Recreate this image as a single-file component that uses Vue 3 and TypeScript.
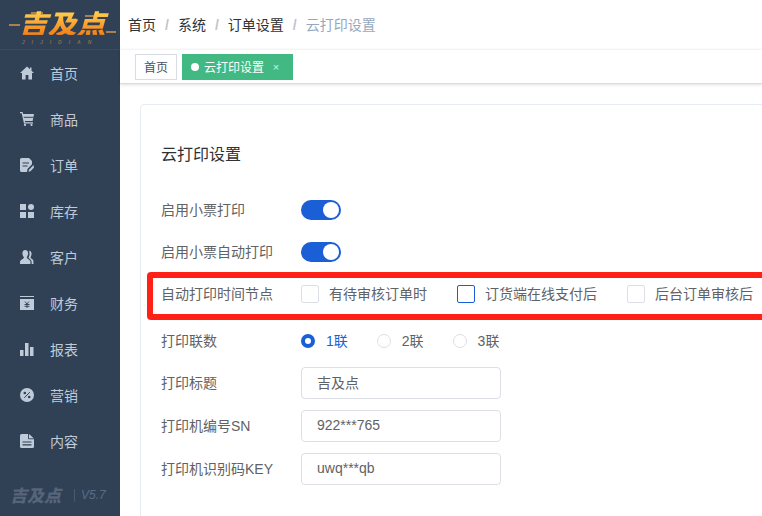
<script setup lang="ts">
const menu = [
  { label: '首页', icon: 'home' },
  { label: '商品', icon: 'cart' },
  { label: '订单', icon: 'order' },
  { label: '库存', icon: 'stock' },
  { label: '客户', icon: 'user' },
  { label: '财务', icon: 'money' },
  { label: '报表', icon: 'chart' },
  { label: '营销', icon: 'promo' },
  { label: '内容', icon: 'doc' },
]
const crumbs = ['首页', '系统', '订单设置']
const checks = [
  { label: '有待审核订单时', focus: false },
  { label: '订货端在线支付后', focus: true },
  { label: '后台订单审核后', focus: false },
]
const radios = [
  { label: '1联', on: true },
  { label: '2联', on: false },
  { label: '3联', on: false },
]
const inputs = [
  { label: '打印标题', value: '吉及点' },
  { label: '打印机编号SN', value: '922***765' },
  { label: '打印机识别码KEY', value: 'uwq***qb' },
]
</script>

<template>
  <div class="app">
    <aside class="side">
      <div class="logo">
        <div class="logo-art">
          <i class="dash d1"></i><i class="dash d2"></i><i class="dash d3"></i><i class="dash d4"></i>
          <span class="logo-text">吉及点</span>
          <span class="logo-sub">JIJIDIAN</span>
        </div>
      </div>
      <nav class="menu">
        <a v-for="m in menu" :key="m.label" class="item">
          <svg class="ico" viewBox="0 0 14 14" width="14" height="14" fill="#bfcbd9">
            <template v-if="m.icon === 'home'">
              <path d="M7 .5 0 7h2v6.500h3.600V9h2.800v4.500H12V7h2L11.500 4.700V1.500H10v1.800z" />
            </template>
            <template v-else-if="m.icon === 'cart'">
              <path d="M0 0h2.500l.7 2H14l-1.400 7H4.800l.3 1.300H13v1.200H4L1.700 1.300H0z" />
              <path d="M3.800 5.300h9.500" stroke="#304156" stroke-width="1" />
              <circle cx="5" cy="12.900" r="1.100" /><circle cx="11.500" cy="12.900" r="1.100" />
            </template>
            <template v-else-if="m.icon === 'order'">
              <path d="M1.500 0H9l3 3v3.300L7.500 11l-.5 3H1.500Q0 14 0 12.500V1.500Q0 0 1.500 0z" />
              <path d="M2.500 5h6.500M2.500 8h5" stroke="#304156" stroke-width="1.200" />
              <path d="M13.500 7 9 11.800 8.500 13.800 10.500 13.300 14 9.500z" />
            </template>
            <template v-else-if="m.icon === 'stock'">
              <rect x="0" y="0" width="6" height="6" /><circle cx="11" cy="3" r="3" />
              <rect x="0" y="8" width="6" height="6" /><rect x="8" y="8" width="6" height="6" />
            </template>
            <template v-else-if="m.icon === 'user'">
              <path d="M5.200 0C7.500 0 8.500 2 8 4.300 7.700 5.800 7 6.800 6.700 7.500c.3 1 2.300 2 3.300 3 .5.600.5 1.800.5 3.500H0c0-1.700 0-3 .6-3.500 1.100-1 3.200-2 3.400-3C3.500 6.800 2.800 5.800 2.500 4.300 2 2 3 0 5.200 0z" />
              <path d="M9 .8c2 .2 2.800 2 2.500 3.800-.2 1.300-.8 2.200-1 2.800.3.800 1.800 1.500 2.500 2.400.4.600.5 2 .5 4.200h-1.800c0-2-.2-3.400-1-4.200-.8-.8-1.800-1.500-2.200-2.300.5-1 1-2 1-3.300 0-1.300-.2-2.500-.5-3.400z" />
            </template>
            <template v-else-if="m.icon === 'money'">
              <rect x="0" y="0" width="14" height="1" /><rect x="0" y="3" width="14" height="11" />
              <path d="M5 5.500 7 8l2-2.500M4.500 8.500h5M4.500 10.300h5M7 8v4" stroke="#304156" stroke-width=".9" fill="none" />
            </template>
            <template v-else-if="m.icon === 'chart'">
              <rect x="0" y="8" width="3.500" height="6" /><rect x="5" y="1" width="3.500" height="13" /><rect x="10" y="5" width="3.500" height="9" />
            </template>
            <template v-else-if="m.icon === 'promo'">
              <circle cx="7" cy="7" r="7" />
              <path d="M4.300 9.800 9.800 4.200" stroke="#304156" stroke-width="1" />
              <circle cx="4.800" cy="5" r="1.300" fill="#304156" /><circle cx="9.200" cy="9" r="1.300" fill="#304156" />
            </template>
            <template v-else>
              <path d="M1.500 0H9l5 4.500v8Q14 14 12.500 14h-11Q0 14 0 12.500V1.500Q0 0 1.500 0z" />
              <path d="M8.500 0v4.800H14" stroke="#304156" stroke-width=".9" fill="none" />
              <path d="M2.500 8h9M2.500 10.800h9" stroke="#304156" stroke-width="1.200" />
            </template>
          </svg>
          <span>{{ m.label }}</span>
        </a>
      </nav>
      <div class="foot">
        <span class="foot-logo">吉及点</span>
        <span class="foot-ver">V5.7</span>
      </div>
    </aside>

    <div class="main">
      <header class="nav">
        <template v-for="c in crumbs" :key="c">
          <span class="crumb">{{ c }}</span><span class="sep">/</span>
        </template>
        <span class="crumb last">云打印设置</span>
      </header>
      <div class="tags">
        <span class="tag">首页</span>
        <span class="tag on"><i class="dot"></i>云打印设置<em class="x">×</em></span>
      </div>
      <section class="page">
        <div class="card">
          <h2 class="title">云打印设置</h2>
          <div class="row sw">
            <label class="lab">启用小票打印</label>
            <span class="switch"><i></i></span>
          </div>
          <div class="row sw">
            <label class="lab">启用小票自动打印</label>
            <span class="switch"><i></i></span>
          </div>
          <div class="row chk">
            <label class="lab">自动打印时间节点</label>
            <div class="group">
              <span v-for="c in checks" :key="c.label" class="check">
                <i class="box" :class="{ focus: c.focus }"></i>{{ c.label }}
              </span>
            </div>
            <div class="mark"></div>
          </div>
          <div class="row rad">
            <label class="lab">打印联数</label>
            <div class="group">
              <span v-for="r in radios" :key="r.label" class="radio" :class="{ on: r.on }">
                <i class="circle"></i>{{ r.label }}
              </span>
            </div>
          </div>
          <div v-for="f in inputs" :key="f.label" class="row inp">
            <label class="lab">{{ f.label }}</label>
            <input class="input" :value="f.value" readonly />
          </div>
        </div>
      </section>
    </div>
  </div>
</template>

<style>
html, body { margin: 0; overflow: hidden; background: #fff; }
</style>

<style scoped>
.app {
  display: flex;
  width: 762px;
  height: 516px;
  overflow: hidden;
  font-family: "Liberation Sans", "Noto Sans CJK SC", sans-serif;
  font-size: 14px;
  color: #606266;
}
.side {
  width: 120px;
  flex: none;
  background: #304156;
  display: flex;
  flex-direction: column;
}
.logo {
  height: 49px;
  border-bottom: 1px solid #3a4a60;
  display: flex;
  align-items: center;
  justify-content: center;
}
.logo-art {
  position: relative;
  width: 106px;
  height: 38px;
  margin-top: 5px;
}
.logo-text {
  display: block;
  text-align: center;
  font: italic 900 29px/28px "Noto Sans CJK SC", sans-serif;
  letter-spacing: 0;
  transform: translateX(2px) scale(1, .92);
  background: linear-gradient(180deg, #ffd04f 10%, #f5861d 90%);
  -webkit-background-clip: text;
  background-clip: text;
  color: transparent;
}
.logo-sub {
  display: block;
  margin-top: 3px;
  text-align: center;
  font: italic 700 5px/6px "Liberation Sans", sans-serif;
  letter-spacing: 7px;
  color: #8d6a45;
}
.dash { position: absolute; height: 2px; background: #a98150; }
.d1 { left: 2px; top: 16px; width: 11px; }
.d2 { right: -3px; top: 23px; width: 10px; }
.d3 { left: 24px; top: 4px; width: 12px; }
.d4 { left: 78px; top: 7px; width: 18px; }
.menu { display: flex; flex-direction: column; }
.item {
  height: 46px;
  display: flex;
  align-items: center;
  padding-left: 20px;
  gap: 16px;
  color: #bfcbd9;
}
.ico { flex: none; }
.foot {
  margin-top: auto;
  height: 42px;
  display: flex;
  align-items: center;
  padding-left: 10px;
}
.foot-logo {
  width: 52px;
  font: italic 900 17px/20px "Noto Sans CJK SC", sans-serif;
  color: #566579;
  letter-spacing: 0;
}
.foot-ver {
  margin-left: 12px;
  padding-left: 6px;
  border-left: 1px solid #48586d;
  font: italic 12px/13px "Liberation Sans", sans-serif;
  color: #5c6b80;
}
.main { flex: 1; min-width: 0; display: flex; flex-direction: column; }
.nav {
  height: 50px;
  flex: none;
  display: flex;
  align-items: center;
  padding-left: 8px;
  color: #303133;
}
.crumb { line-height: 20px; }
.crumb.last { color: #97a8be; }
.sep { margin: 0 9px; color: #c0c4cc; font-weight: 700; }
.tags {
  height: 34px;
  flex: none;
  display: flex;
  align-items: center;
  gap: 5px;
  padding-left: 15px;
  box-sizing: border-box;
  background: #fff;
  border-bottom: 1px solid #d8dce5;
  box-shadow: 0 1px 3px rgba(0, 0, 0, .12), 0 -1px 3px rgba(0, 0, 0, .04);
}
.tag {
  box-sizing: border-box;
  height: 26px;
  display: inline-flex;
  align-items: center;
  padding: 0 8px;
  font-size: 12px;
  color: #495060;
  border: 1px solid #d8dce5;
  background: #fff;
}
.tag.on { background: #42b983; border-color: #42b983; color: #fff; padding-right: 12px; }
.dot { width: 8px; height: 8px; border-radius: 50%; background: #fff; margin-right: 5px; }
.x { font-style: normal; margin-left: 8px; font-size: 11px; color: #d4f0e2; width: 8px; text-align: center; }
.page { flex: 1; padding: 20px 0 0 20px; min-height: 0; }
.card {
  box-sizing: border-box;
  width: 760px;
  height: 600px;
  padding: 0 20px;
  border: 1px solid #e6ebf5;
  border-radius: 4px;
  background: #fff;
}
.title {
  margin: 38px 0 27px;
  font-size: 16px;
  font-weight: 400;
  line-height: 24px;
  color: #303133;
}
.row { position: relative; display: flex; align-items: center; }
.lab { width: 140px; flex: none; color: #606266; padding-bottom: 2px; }
.sw { height: 32px; margin-bottom: 10px; }
.chk { height: 32px; margin-bottom: 15px; }
.rad { height: 32px; margin-bottom: 10px; }
.inp { height: 32px; margin-bottom: 11px; }
.switch {
  position: relative;
  display: block;
  width: 40px;
  height: 20px;
  border-radius: 10px;
  background: #1a5fd6;
}
.switch i {
  position: absolute;
  right: 2px;
  top: 2px;
  width: 16px;
  height: 16px;
  border-radius: 50%;
  background: #fff;
}
.group { display: flex; align-items: center; }
.check { display: inline-flex; align-items: center; margin-right: 30px; white-space: nowrap; padding-bottom: 2px; }
.box {
  box-sizing: border-box;
  width: 18px;
  height: 18px;
  margin: 2px 10px 0 0;
  border: 1px solid #dcdfe6;
  border-radius: 2px;
  background: #fff;
}
.box.focus { border-color: #1a5fd6; }
.radio { display: inline-flex; align-items: center; margin-right: 29px; padding-bottom: 2px; }
.radio.on { color: #1a5fd6; }
.circle {
  box-sizing: border-box;
  width: 14px;
  height: 14px;
  margin: 2px 11px 0 0;
  border: 1px solid #dcdfe6;
  border-radius: 50%;
  background: #fff;
}
.radio.on .circle { border: 4px solid #1a5fd6; }
.input {
  box-sizing: border-box;
  width: 200px;
  height: 32px;
  padding: 0 15px 2px;
  border: 1px solid #dcdfe6;
  border-radius: 4px;
  outline: none;
  font: inherit;
  color: #606266;
  background: #fff;
}
.mark {
  position: absolute;
  left: -14px;
  top: -6px;
  width: 640px;
  height: 48px;
  box-sizing: border-box;
  border: 6px solid #ff2116;
  border-radius: 4px;
  pointer-events: none;
}
</style>
